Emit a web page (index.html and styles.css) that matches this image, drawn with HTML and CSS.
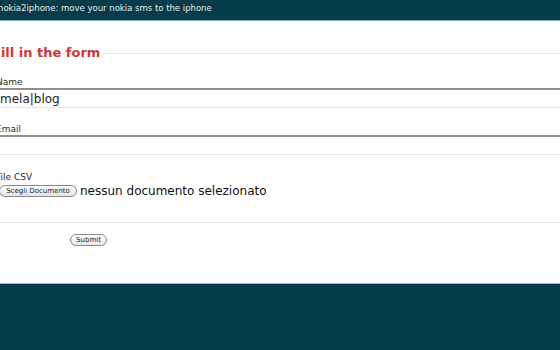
FILE: index.html
```html
<!DOCTYPE html>
<html lang="en">
<head>
<meta charset="utf-8">
<title>nokia2iphone</title>
<link rel="stylesheet" href="styles.css">
</head>
<body>
<header class="topbar">nokia2iphone: move your nokia sms to the iphone</header>
<main class="content">
  <form class="upload-form">
    <fieldset class="form-set">
      <legend class="form-title">Fill in the form</legend>
      <label class="field-label first">Name</label>
      <input class="text-input" type="text" value="mela|blog">
      <label class="field-label">Email</label>
      <input class="text-input" type="text" value="">
      <label class="field-label file-label">File CSV</label>
      <div class="file-row">
        <button type="button" class="pill-btn file-btn">Scegli Documento</button>
        <span class="file-status">nessun documento selezionato</span>
      </div>
      <div class="separator"></div>
      <button type="button" class="pill-btn submit-btn">Submit</button>
    </fieldset>
  </form>
</main>
<footer class="bottombar"></footer>
</body>
</html>
```
FILE: styles.css
```css
html, body {
  margin: 0;
  padding: 0;
  height: 100%;
  overflow: hidden;
}
body {
  display: flex;
  flex-direction: column;
  background: #ffffff;
  font-family: "DejaVu Sans", "Liberation Sans", sans-serif;
  color: #222;
}
.topbar {
  height: 20px;
  flex: none;
  background: #053b4b;
  border-bottom: 1px solid #8fb4bf;
  color: #e6eef0;
  font-size: 8.5px;
  line-height: 17px;
  text-indent: -2px;
  white-space: nowrap;
}
.content {
  height: 262px;
  flex: none;
  overflow: hidden;
}
.upload-form {
  margin: 0;
}
.form-set {
  margin: 24px 0 0 -8px;
  padding: 0;
  border: 0;
  border-top: 1px solid #e3e3e3;
  min-width: 0;
}
.form-title {
  padding: 0 3px 0 0;
  margin-left: 0;
  font-size: 13px;
  font-weight: bold;
  line-height: 16px;
  color: #cf3636;
}
.field-label {
  display: block;
  margin: 16px 0 0 4px;
  font-size: 9px;
  line-height: 11px;
  color: #2a2a2a;
}
.file-label {
  margin-top: 17px;
}
.text-input {
  display: block;
  box-sizing: border-box;
  width: 620px;
  height: 20px;
  margin: 0;
  border: 0;
  border-top: 2px solid #8e8e8e;
  border-bottom: 1px solid #e4e4e4;
  padding: 0 0 0 8px;
  font-family: "DejaVu Sans", sans-serif;
  font-size: 12px;
  color: #222;
  background: #fff;
  outline: none;
}
.file-row {
  display: flex;
  align-items: center;
  height: 14px;
  margin: 1px 0 0 7px;
  gap: 3px;
}
.pill-btn {
  box-sizing: border-box;
  height: 12px;
  padding: 0 4px;
  border: 1px solid #888;
  border-radius: 6px;
  background: linear-gradient(#ffffff, #e6e6e6);
  font-family: "DejaVu Sans", sans-serif;
  font-size: 7px;
  line-height: 10px;
  color: #1a1a1a;
}
.file-btn {
  width: 78px;
}
.file-status {
  font-size: 12px;
  line-height: 14px;
  color: #111;
}
.separator {
  margin-top: 24px;
  border-top: 1px solid #e6e6e6;
  width: 620px;
}
.submit-btn {
  display: block;
  width: 37px;
  margin: 11px 0 0 78px;
  padding: 0;
}
.bottombar {
  flex: 1;
  background: #053b4b;
  border-top: 1px solid #9cc0ca;
}
```
